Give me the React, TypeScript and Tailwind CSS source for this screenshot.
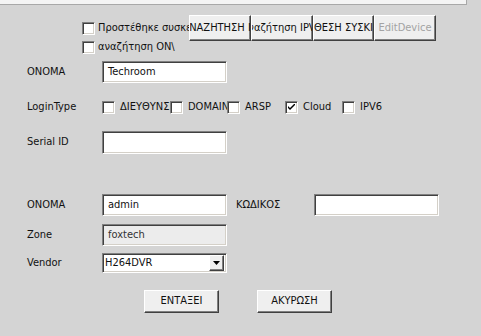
import React from 'react';

function CheckBox({ checked = false }: { checked?: boolean }) {
  return (
    <span className="relative inline-block h-[13px] w-[13px] shrink-0 border border-t-[#808080] border-l-[#808080] border-b-white border-r-white bg-white shadow-[inset_1px_1px_0_#404040,inset_-1px_-1px_0_#d4d0c8]">
      {checked && (
        <svg className="absolute left-[2px] top-[2px]" width="7" height="7" viewBox="0 0 7 7">
          <path d="M0 2 L0 4 L2 6 L7 1 L7 -1 L2 4 Z" fill="#000" />
        </svg>
      )}
    </span>
  );
}

function TextBox({ value = '', disabled = false, w = 'w-[125px]', h = 'h-[22px]' }: { value?: string; disabled?: boolean; w?: string; h?: string }) {
  return (
    <div
      className={`${w} ${h} flex items-center overflow-hidden whitespace-nowrap border border-t-[#808080] border-l-[#808080] border-b-white border-r-white pl-[5px] shadow-[inset_1px_1px_0_#404040,inset_-1px_-1px_0_#d4d0c8] ${disabled ? 'bg-[#ececec] text-[#333]' : 'bg-white'}`}
    >
      {value}
    </div>
  );
}

function Btn({ label, w, h, disabled = false }: { label: string; w: string; h: string; disabled?: boolean }) {
  return (
    <div
      className={`${w} ${h} flex shrink-0 items-center justify-center overflow-hidden whitespace-nowrap border border-t-white border-l-white border-b-[#404040] border-r-[#404040] bg-[#efefef] shadow-[inset_-1px_-1px_0_#808080] ${disabled ? 'text-[#a3a3a3]' : ''}`}
    >
      {label}
    </div>
  );
}

const LOGIN_TYPES = [
  { label: 'ΔΙΕΥΘΥΝΣΗ', w: 'w-[68px]', checked: false },
  { label: 'DOMAIN', w: 'w-[57px]', checked: false },
  { label: 'ARSP', w: 'w-[58px]', checked: false },
  { label: 'Cloud', w: 'w-[57px]', checked: true },
  { label: 'IPV6', w: 'w-[57px]', checked: false },
];

export default function App() {
  return (
    <div className="h-[336px] w-[481px] overflow-hidden bg-[#d4d4d4] font-['DejaVu_Sans_Condensed','Liberation_Sans',Arial,sans-serif] text-[11px] text-[#111]">
      {/* list box edge */}
      <div className="h-[5px] w-[467px] border-b border-r border-[#a8a8a8] bg-[#f4f4f4]" />

      {/* top options */}
      <div className="mt-[10px] pl-[82px]">
        <div className="flex h-[26px] items-center">
          <CheckBox />
          <span className="ml-[3px] w-[91px] shrink-0 overflow-hidden whitespace-nowrap">Προστέθηκε συσκευή</span>
          <Btn label="ΝΑΖΗΤΗΣΗ Ι" w="w-[62px]" h="h-[26px]" />
          <Btn label="ναζήτηση IPV" w="w-[62px]" h="h-[26px]" />
          <Btn label="ΘΕΣΗ ΣΥΣΚΙ" w="w-[61px]" h="h-[26px]" />
          <Btn label="EditDevice" w="w-[62px]" h="h-[26px]" disabled />
        </div>
        <div className="flex h-[13px] items-center">
          <CheckBox />
          <span className="ml-[3px] w-[91px] overflow-hidden whitespace-nowrap">αναζήτηση ON\</span>
        </div>
      </div>

      {/* form */}
      <div className="pl-[27px]">
        <div className="mt-[7px] flex h-[22px] items-center">
          <span className="w-[75px]">ONOMA</span>
          <TextBox value="Techroom" />
        </div>

        <div className="mt-[18px] flex h-[13px] items-center">
          <span className="w-[75px]">LoginType</span>
          {LOGIN_TYPES.map((t) => (
            <div key={t.label} className={`${t.w} flex items-center overflow-hidden whitespace-nowrap`}>
              <CheckBox checked={t.checked} />
              <span className="ml-[5px]">{t.label}</span>
            </div>
          ))}
        </div>

        <div className="mt-[17px] flex h-[23px] items-center">
          <span className="w-[75px]">Serial ID</span>
          <TextBox h="h-[23px]" />
        </div>

        <div className="mt-[40px] flex h-[22px] items-center">
          <span className="w-[75px]">ONOMA</span>
          <TextBox value="admin" />
          <span className="ml-[9px] w-[78px]">ΚΩΔΙΚΟΣ</span>
          <TextBox />
        </div>

        <div className="mt-[8px] flex h-[22px] items-center">
          <span className="w-[75px]">Zone</span>
          <TextBox value="foxtech" disabled />
        </div>

        <div className="mt-[7px] flex h-[20px] items-center">
          <span className="w-[75px]">Vendor</span>
          <div className="flex h-[20px] w-[125px] items-center border border-t-[#808080] border-l-[#808080] border-b-white border-r-white bg-white pl-[2px] shadow-[inset_1px_1px_0_#404040,inset_-1px_-1px_0_#d4d0c8]">
            <span className="flex-1">H264DVR</span>
            <div className="mr-[2px] flex h-[16px] w-[15px] items-center justify-center border border-t-white border-l-white border-b-[#404040] border-r-[#404040] bg-[#efefef] shadow-[inset_-1px_-1px_0_#808080]">
              <svg width="7" height="4" viewBox="0 0 7 4">
                <path d="M0 0 H7 L3.5 4 Z" fill="#000" />
              </svg>
            </div>
          </div>
        </div>
      </div>

      <div className="mt-[17px] flex gap-[38px] pl-[144px]">
        <Btn label="ΕΝΤΑΞΕΙ" w="w-[75px]" h="h-[23px]" />
        <Btn label="ΑΚΥΡΩΣΗ" w="w-[75px]" h="h-[23px]" />
      </div>
    </div>
  );
}
